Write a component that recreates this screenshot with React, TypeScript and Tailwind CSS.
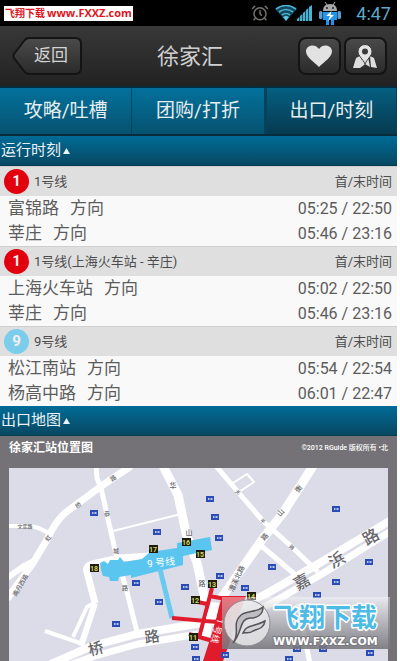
import { AlarmClock } from 'lucide-react';

const tabs = [
  { label: '攻略/吐槽', active: false },
  { label: '团购/打折', active: false },
  { label: '出口/时刻', active: true },
];

const lines = [
  {
    no: '1', name: '1号线', badge: 'bg-[#e2000f]',
    rows: [
      { to: '富锦路', time: '05:25 / 22:50' },
      { to: '莘庄', time: '05:46 / 23:16' },
    ],
  },
  {
    no: '1', name: '1号线(上海火车站 - 辛庄)', badge: 'bg-[#e2000f]',
    rows: [
      { to: '上海火车站', time: '05:02 / 22:50' },
      { to: '莘庄', time: '05:46 / 23:16' },
    ],
  },
  {
    no: '9', name: '9号线', badge: 'bg-[#7bcdec]',
    rows: [
      { to: '松江南站', time: '05:54 / 22:54' },
      { to: '杨高中路', time: '06:01 / 22:47' },
    ],
  },
];

// white streets: path + stroke width
const roads: [string, number][] = [
  ['M131 466 L100 487 L65 513 Q55 522 48 538 L33 563 L7 599', 7],
  ['M96 466 L97 478 L101 488 L115 550 L127 592 L138 636', 5],
  ['M7 526 L30 526 Q40 527 51 535', 4],
  ['M7 578 L24 566 L34 561', 6],
  ['M113 531 L181 514', 2],
  ['M150 556 L120 558 L92 564 Q85 566 87 572 L95 603', 7],
  ['M95 603 L81 646', 6],
  ['M92 604 L87 607 L73 637', 4],
  ['M45 631 L80 643', 4],
  ['M163 466 L178 495 L186 533 L197 563 L206 604', 9],
  ['M216 466 L238 492 L263 521 L292 547 L318 572', 5],
  ['M233 483 L247 474 L254 482 L239 492', 2],
  ['M313 466 L283 513 L264 537 L236 577 L220 600', 9],
  ['M258 543 L298 577', 5],
  ['M44 667 L92 646 L137 634 L214 621', 8],
  ['M64 667 L95 656 L138 644 L210 632', 7],
  ['M391 520 L318 564 L266 594 L232 610', 8],
  ['M391 531 L322 574 L270 604 L236 620', 7],
  ['M298 604 L310 664', 5],
];

const shops = [
  [94, 513], [136, 583], [116, 624], [210, 499], [215, 517], [219, 538], [157, 532],
  [159, 602], [185, 587], [220, 576], [245, 588], [272, 567], [195, 647], [196, 659],
  [225, 655], [336, 509], [336, 582], [369, 562], [317, 595], [297, 649], [323, 649],
  [289, 659], [370, 653],
];

const exits: [number, number, string][] = [
  [94, 568, '18'], [153, 549, '17'], [186, 542, '16'], [200, 554, '15'],
  [251, 596, '14'], [212, 584, '13'], [195, 600, '12'], [193, 637, '11'],
];

// x, y, angle, size, text
const streetNames: [number, number, number, number, string][] = [
  [96, 649, -15, 15, '桥'],
  [152, 637, -8, 15, '路'],
  [302, 582, -30, 16, '嘉'],
  [337, 560, -30, 16, '浜'],
  [371, 537, -30, 16, '路'],
  [113, 478, -35, 6, '路'],
  [78, 505, -35, 6, '桥'],
  [107, 513, 0, 6, '恭'],
  [48, 538, -50, 6, '虹'],
  [116, 550, 0, 6, '城'],
  [125, 587, 0, 6, '路'],
  [25, 526, 0, 5, '文定路'],
  [20, 585, -60, 6, '南丹西路'],
  [173, 486, 0, 7, '华'],
  [189, 533, 0, 7, '山'],
  [202, 584, 0, 7, '路'],
  [237, 579, -65, 7, '漕溪北路'],
  [238, 492, 40, 5, '天'],
  [263, 521, 40, 5, '平'],
  [292, 547, 40, 5, '路'],
  [299, 489, -50, 7, '衡'],
  [281, 513, -50, 7, '山'],
  [265, 537, -50, 7, '路'],
];

const iconButton =
  'flex h-[38px] w-[43px] items-center justify-center rounded-lg border-2 border-[#141414] bg-linear-to-b from-[#4a4a4a] to-[#2b2b2b]';

function StatusBar() {
  return (
    <div className="flex h-[26px] items-center justify-between bg-black pr-[6px] pl-1">
      <div className="flex h-[15px] items-center gap-[2px] bg-white px-px text-[10px] font-bold text-[#e0141c]">
        <span>飞翔下载</span>
        <span className="font-['Open_Sans'] text-[11px]">www.FXXZ.com</span>
      </div>
      <div className="flex items-center">
        <AlarmClock className="mr-[6px] size-[18px] text-[#77736f]" strokeWidth={2} />
        <svg viewBox="0 0 22 16" className="h-4 w-[22px]">
          <path d="M0 4 Q11 -4 22 4 L11 16 Z" fill="#15475a" />
          <path d="M1 4 Q11 -3 21 4 M4 7 Q11 2 18 7 M7 10 Q11 7 15 10" fill="none" stroke="#49b3d6" strokeWidth="1.6" />
          <path d="M8 12 Q11 10 14 12 L11 16 Z" fill="#5fc8e8" />
        </svg>
        <svg viewBox="0 0 15 16" className="h-4 w-[15px]">
          <path d="M0 16 V14 L2.400 12 V16 Z M3 16 V11 L5.400 9 V16 Z M6 16 V8 L8.400 6 V16 Z M9 16 V5 L11.400 3 V16 Z M12 16 V2 L15 0 V16 Z" fill="#4bb1d2" />
        </svg>
        <svg viewBox="0 0 24 24" className="mr-[14px] ml-[6px] size-6">
          <path d="M7 1 L9 4 M17 1 L15 4" stroke="#a9a9a9" strokeWidth="1" />
          <path d="M5 10 Q5 3 12 3 Q19 3 19 10 Z" fill="#a9a9a9" />
          <circle cx="9" cy="7" r="1" fill="#222" />
          <circle cx="15" cy="7" r="1" fill="#222" />
          <rect x="1" y="10" width="3.500" height="8" rx="1.500" fill="#5f9fcc" />
          <rect x="19.500" y="10" width="3.500" height="8" rx="1.500" fill="#5f9fcc" />
          <path d="M5 11 H19 V19 H16 V24 H13 V19 H11 V24 H8 V19 H5 Z" fill="#2196ee" />
          <path d="M13.500 10 L8 15 H12 L10 20 L16 14 H12.500 Z" fill="#fff" />
        </svg>
        <span className="text-[18px] text-[#5ba9c9]">4:47</span>
      </div>
    </div>
  );
}

function Header() {
  return (
    <header className="flex h-[60px] items-center justify-between bg-linear-to-b from-[#383838] to-[#222222] pr-[10px] pl-3">
      <button className="relative flex h-[38px] w-[70px] items-center justify-center pl-2 text-[17px] text-[#d4d4d4]">
        <svg viewBox="0 0 70 38" className="absolute inset-0 h-full w-full">
          <defs>
            <linearGradient id="back" x2="0" y2="1">
              <stop offset="0" stopColor="#4b4b4b" />
              <stop offset="1" stopColor="#2a2a2a" />
            </linearGradient>
          </defs>
          <path d="M17 1 H63 Q69 1 69 7 V31 Q69 37 63 37 H17 Q14 37 12 34 L2 21 Q1 19 2 17 L12 4 Q14 1 17 1 Z" fill="url(#back)" stroke="#141414" strokeWidth="2" />
        </svg>
        <span className="relative">返回</span>
      </button>
      <h1 className="text-[22px] text-[#cfcfcf]">徐家汇</h1>
      <div className="flex gap-[3px]">
        <button aria-label="收藏" className={iconButton}>
          <svg viewBox="0 0 28 24" className="h-6 w-7">
            <path d="M14 23 C9 18 1 13 1 7.500 C1 1 10 -1 14 5 C18 -1 27 1 27 7.500 C27 13 19 18 14 23 Z" fill="#e2e2e2" />
          </svg>
        </button>
        <button aria-label="地图" className={iconButton}>
          <svg viewBox="0 0 26 25" className="h-[25px] w-[26px]">
            <path d="M4 14 L8 12 L12 21 L8 24 L1 24 Z M10 13 L13 18 L16 13 L18 23 L13 20 L9 23 Z M18 12 L22 14 L25 24 L19 23 Z" fill="#dedede" />
            <path d="M13 20 C11 15 6 12 6 7.500 A7 7 0 0 1 20 7.500 C20 12 15 15 13 20 Z" fill="#e4e4e4" stroke="#3a3a3a" strokeWidth="1" />
            <circle cx="13" cy="7.500" r="3" fill="#3a3a3a" />
          </svg>
        </button>
      </div>
    </header>
  );
}

function SectionTitle({ title }: { title: string }) {
  return (
    <h2 className="flex h-[30px] items-center gap-[2px] border-b border-[#063c52] bg-linear-to-b from-[#006c97] to-[#064862] pl-px text-[15px] text-[#eaf2f5]">
      {title}
      <svg viewBox="0 0 7 6" className="h-[6px] w-[7px]">
        <path d="M3.500 0 L7 6 H0 Z" fill="currentColor" />
      </svg>
    </h2>
  );
}

function Line({ line }: { line: (typeof lines)[number] }) {
  return (
    <table className="w-full border-separate border-spacing-0">
      <thead>
        <tr className="h-[30px] bg-[#dfdfdf] text-[13px] text-[#4c4c4c]">
          <th className="border-t border-[#cfcfcf] p-0 pl-1 text-left font-normal">
            <div className="flex items-center gap-[5px]">
              <span className={`flex size-[25px] items-center justify-center rounded-full text-[15px] font-bold text-[#f6eeee] ${line.badge}`}>
                {line.no}
              </span>
              {line.name}
            </div>
          </th>
          <th className="border-t border-[#cfcfcf] p-0 pr-[5px] text-right font-normal">首/末时间</th>
        </tr>
      </thead>
      <tbody>
        {line.rows.map((row) => (
          <tr key={row.to} className="h-[25px] bg-[#f9f9f9] text-[#5c5c5c]">
            <td className="p-0 pl-2 text-[17px] leading-[25px]">
              <span className="mr-[11px]">{row.to}</span>
              <span>方向</span>
            </td>
            <td className="p-0 pr-[5px] text-right text-[16px] leading-[25px]">{row.time}</td>
          </tr>
        ))}
      </tbody>
    </table>
  );
}

function StationMap() {
  return (
    <svg viewBox="9 468 379 193" className="block w-full bg-[#dcdbe8]">
      {roads.map(([d, w]) => (
        <path key={d} d={d} fill="none" stroke="#fff" strokeWidth={w} strokeLinejoin="round" />
      ))}

      {/* line 9 */}
      <path d="M100 563 L104 561 L108 564 L110 560 L118 560 L120 557 L124 562 L142 559 L150 552 L177 548 L177 543 L210 537 L212 550 L183 556 L183 565 L131 578 L131 575 L119 577 L118 581 L110 581 L109 577 L103 576 L101 570 Z" fill="#5ac5ef" />
      <path d="M160 569 L172 618" stroke="#6ac9ee" strokeWidth="5" />
      <text x="161" y="566" fontSize="10" fill="#fff" textAnchor="middle" transform="rotate(-6 161 562)">9 号线</text>

      {/* line 1 */}
      <path d="M222 596 H246 L222 664 H202 L213 630 Z" fill="#e01b2b" />
      <path d="M212 588 L199 638 M193 601 L207 604 M172 618 L217 622 M209 596 L226 599 M189 634 L216 642" fill="none" stroke="#e01b2b" strokeWidth="4" />
      <path d="M211 602 L219 603 L216 619 L206 618 Z M205 625 L212 626 L210 637 L202 635 Z" fill="#fff" />
      <text x="217" y="634" fontSize="9" fill="#fff" textAnchor="middle" transform="rotate(105 217 631)">1 号线</text>

      {streetNames.map(([x, y, angle, size, name]) => (
        <text key={`${x}-${y}`} x={x} y={y} fontSize={size} fontWeight="500" fill="#66666b" textAnchor="middle" dominantBaseline="central" transform={`rotate(${angle} ${x} ${y})`}>
          {name}
        </text>
      ))}
      {shops.map(([x, y]) => (
        <g key={`${x}-${y}`}>
          <rect x={x - 4} y={y - 3} width="8" height="6" fill="#2a4cb4" />
          <path d={`M${x - 2} ${y} h1.500 m1 0 h2`} stroke="#b9c6ee" strokeWidth="2" />
        </g>
      ))}
      {exits.map(([x, y, no]) => (
        <g key={no}>
          <rect x={x - 4} y={y - 4} width="9" height="8" fill="#1d1d10" />
          <text x={x} y={y + 3} fontSize="7" fontWeight="bold" fill="#d9d65a" textAnchor="middle">{no}</text>
        </g>
      ))}
    </svg>
  );
}

function Watermark() {
  return (
    <div className="absolute right-[7px] bottom-3 flex h-[52px] w-[168px] items-center gap-px bg-linear-to-b from-white/40 to-[#77777c]/90 pl-px">
      <svg viewBox="0 0 48 48" className="size-12 shrink-0">
        <circle cx="24" cy="24" r="23" fill="#e9e9eb" fillOpacity="0.85" stroke="#8d8d90" />
        <path d="M10 44 C18 34 8 25 18 16 C24 11 33 14 40 8 C40 16 34 19 27 19 C16 20 20 32 10 44 Z" fill="#bdbdc2" stroke="#55555a" strokeWidth="1.500" />
        <path d="M20 34 C23 25 32 28 42 22 C41 30 34 30 30 32 C26 35 23 33 20 34 Z" fill="#d2d2d6" stroke="#55555a" strokeWidth="1.500" />
      </svg>
      <svg viewBox="0 0 116 50" className="h-[50px] w-[116px]">
        <g strokeLinejoin="round" paintOrder="stroke" fontWeight="bold">
          <text x="1" y="29" fontSize="26" fill="#4dbbe6" stroke="#fff" strokeWidth="3">飞翔下载</text>
          <text x="1" y="47" fontSize="11" fill="#fff" stroke="#77777c" strokeWidth="2" className="font-['DejaVu_Sans']">WWW.FXXZ.COM</text>
        </g>
      </svg>
    </div>
  );
}

export default function App() {
  return (
    <div className="bg-white pr-[3px] font-['Roboto','Noto_Sans_CJK_SC',sans-serif]">
      <StatusBar />
      <Header />
      <nav className="grid h-[50px] grid-cols-3 border-y-2 border-[#072c3c]">
        {tabs.map((tab) => (
          <button
            key={tab.label}
            className={`border-r border-[#06435b] bg-linear-to-b text-[19px] text-[#e6eef1] ${
              tab.active ? 'border-l-2 from-[#045f82] to-[#063a50]' : 'from-[#02719c] to-[#065270]'
            }`}
          >
            {tab.label}
          </button>
        ))}
      </nav>

      <SectionTitle title="运行时刻" />
      {lines.map((line) => (
        <Line key={line.name} line={line} />
      ))}

      <SectionTitle title="出口地图" />
      <section className="relative bg-[#747276] px-[9px]">
        <div className="flex h-8 items-start justify-between pt-1 text-white">
          <h3 className="text-[12px] leading-4 font-bold">徐家汇站位置图</h3>
          <p className="text-[7px] leading-4 font-medium">©2012 RGuide 版权所有 •北</p>
        </div>
        <StationMap />
        <Watermark />
      </section>
    </div>
  );
}
